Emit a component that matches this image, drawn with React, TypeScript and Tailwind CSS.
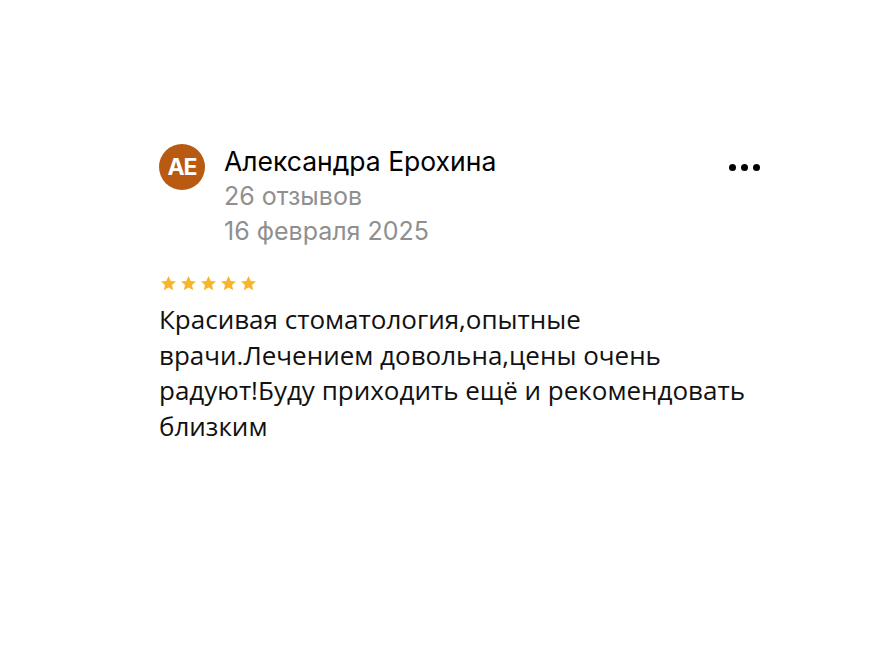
export default function App() {
  return (
    <div className="min-h-[655px] w-full bg-white pt-[144px] pl-[159px]">
      <div className="w-[604px]">
        <div className="flex items-start">
          <div className="flex h-[46px] w-[46px] shrink-0 items-center justify-center rounded-full bg-[#b85a12] text-[23px] font-bold tracking-[-1px] text-white [font-family:Inter,sans-serif]">
            AE
          </div>
          <div className="ml-[19px] flex-1 [font-family:Inter,sans-serif]">
            <div className="text-[26.5px] leading-[35px] text-black">Александра Ерохина</div>
            <div className="text-[25px] leading-[35px] text-[#8f8f8f]">26 отзывов</div>
            <div className="text-[25px] leading-[35px] text-[#8f8f8f]">16 февраля 2025</div>
          </div>
          <div className="mt-[20px] flex gap-[5px] pr-[3px]">
            <span className="h-[7px] w-[7px] rounded-full bg-black" />
            <span className="h-[7px] w-[7px] rounded-full bg-black" />
            <span className="h-[7px] w-[7px] rounded-full bg-black" />
          </div>
        </div>
        <div className="mt-[26px] flex gap-[3px] pl-[1px]">
          {[0, 1, 2, 3, 4].map((i) => (
            <svg key={i} width="17" height="17" viewBox="0 0 24 24">
              <path
                fill="#f6b52a"
                d="M12 1.5l3.1 7 7.4.6-5.6 4.9 1.7 7.4L12 17.5l-6.6 3.9 1.7-7.4L1.5 9.1l7.4-.6z"
              />
            </svg>
          ))}
        </div>
        <p className="mt-[10px] text-[26px] leading-[35.5px] text-[#111] [font-family:'Open_Sans',sans-serif]">
          Красивая стоматология,опытные
          <br />
          врачи.Лечением довольна,цены очень
          <br />
          радуют!Буду приходить ещё и рекомендовать
          <br />
          близким
        </p>
      </div>
    </div>
  );
}
